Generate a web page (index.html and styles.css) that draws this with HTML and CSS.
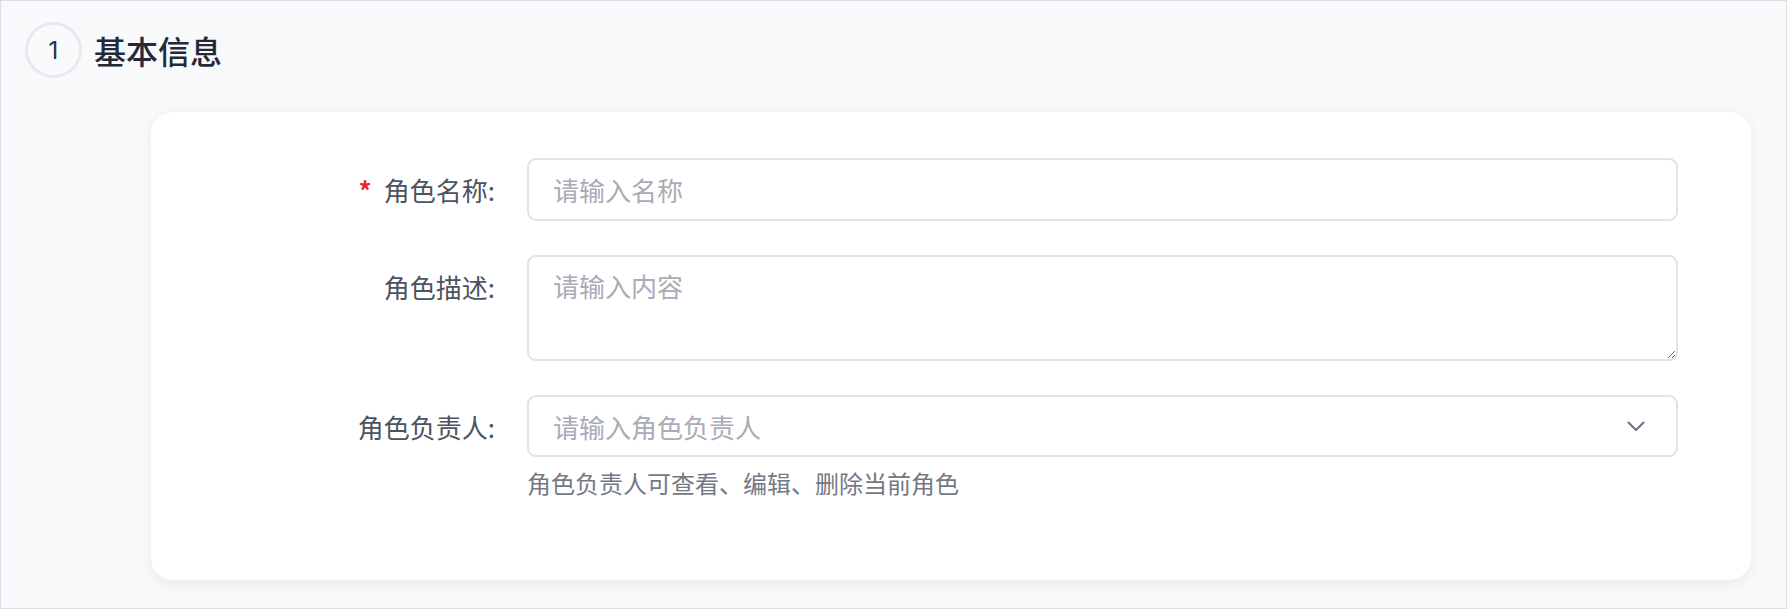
FILE: index.html
```html
<!DOCTYPE html>
<html lang="zh-CN">
<head>
<meta charset="utf-8">
<title>基本信息</title>
<link rel="stylesheet" href="styles.css">
</head>
<body>
<div class="page">
  <div class="section-head">
    <div class="step">1</div>
    <h2 class="section-title">基本信息</h2>
  </div>
  <div class="card">
    <div class="form-row">
      <label class="form-label"><span class="req">*</span>角色名称:</label>
      <div class="form-control">
        <input class="input" type="text" placeholder="请输入名称">
      </div>
    </div>
    <div class="form-row">
      <label class="form-label">角色描述:</label>
      <div class="form-control">
        <textarea class="textarea" placeholder="请输入内容"></textarea>
      </div>
    </div>
    <div class="form-row">
      <label class="form-label">角色负责人:</label>
      <div class="form-control">
        <div class="select">
          <span class="select-placeholder">请输入角色负责人</span>
          <svg class="chevron" width="18" height="11" viewBox="0 0 18 11" fill="none">
            <path d="M1.5 1.5 L9 9 L16.5 1.5" stroke="#6b7180" stroke-width="2" stroke-linecap="round" stroke-linejoin="round"/>
          </svg>
        </div>
        <div class="help">角色负责人可查看、编辑、删除当前角色</div>
      </div>
    </div>
  </div>
</div>
</body>
</html>
```

FILE: styles.css
```css
* { box-sizing: border-box; }

html, body {
  margin: 0;
  padding: 0;
  background: #ffffff;
}

body {
  font-family: "Noto Sans CJK SC", "Noto Sans", "Liberation Sans", sans-serif;
}

.page {
  width: 1787px;
  height: 609px;
  border: 1px solid #dcdee3;
  background: #f8f9fb;
  padding: 21px 35px 0 24px;
}

.section-head {
  display: flex;
  align-items: center;
  gap: 12px;
  height: 56px;
}

.step {
  width: 57px;
  height: 56px;
  border-radius: 50%;
  border: 3px solid #e7e9ef;
  background: #f9fafc;
  display: flex;
  align-items: center;
  justify-content: center;
  font-family: "Inter", "Liberation Sans", sans-serif;
  font-size: 24px;
  color: #2b3040;
}

.section-title {
  margin: 0;
  font-size: 32px;
  font-weight: 500;
  color: #242938;
  line-height: 42px;
}

.card {
  margin: 34px 0 0 126px;
  height: 468px;
  background: #ffffff;
  border-radius: 22px;
  box-shadow: 0 4px 14px rgba(30, 40, 60, 0.07);
  padding: 46px 73px 0 0;
  display: flex;
  flex-direction: column;
  gap: 34px;
}

.form-row {
  display: flex;
  gap: 32px;
}

.form-label {
  width: 344px;
  flex: none;
  text-align: right;
  font-size: 26px;
  line-height: 63px;
  color: #4c5361;
  white-space: nowrap;
}

.req {
  color: #f0262f;
  font-weight: 700;
  margin-right: 12px;
}

.form-control {
  flex: 1;
  min-width: 0;
}

.input,
.textarea,
.select {
  width: 100%;
  border: 2px solid #e0e2e8;
  border-radius: 9px;
  background: #ffffff;
  font-family: inherit;
  font-size: 26px;
  color: #2b3040;
  outline: none;
}

.input {
  height: 63px;
  padding: 0 24px;
}

.textarea {
  display: block;
  height: 106px;
  padding: 10px 24px;
  line-height: 38px;
  resize: vertical;
}

.input::placeholder,
.textarea::placeholder {
  color: #a9acb6;
}

.select {
  height: 62px;
  padding: 0 31px 0 24px;
  display: flex;
  align-items: center;
  justify-content: space-between;
}

.select-placeholder {
  color: #a9acb6;
}

.chevron {
  flex: none;
}

.help {
  margin-top: 10px;
  font-size: 24px;
  line-height: 32px;
  color: #737985;
}
```
